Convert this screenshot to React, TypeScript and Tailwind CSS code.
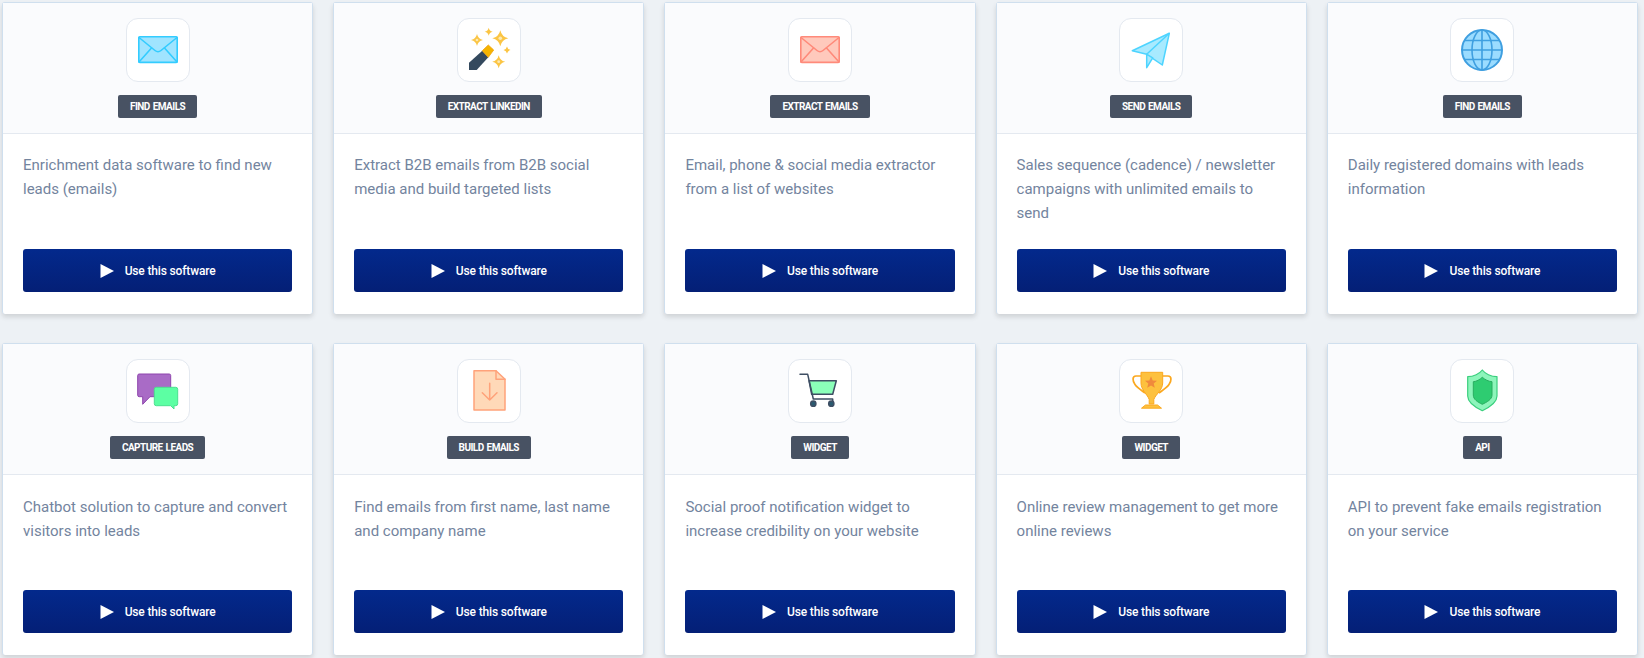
import type { ReactNode } from "react";

function star(cx: number, cy: number, r: number) {
  const k = r * 0.18;
  return `M${cx} ${cy - r}Q${cx + k} ${cy - k} ${cx + r} ${cy}Q${cx + k} ${cy + k} ${cx} ${cy + r}Q${cx - k} ${cy + k} ${cx - r} ${cy}Q${cx - k} ${cy - k} ${cx} ${cy - r}Z`;
}

function MailIcon({ fill, stroke }: { fill: string; stroke: string }) {
  return (
    <g fill="none" stroke={stroke} strokeWidth="1.6" strokeLinejoin="round" strokeLinecap="round">
      <rect x="3.8" y="9.8" width="38.4" height="25.6" rx="1" fill={fill} />
      <path d="M4 10.5 20 23.5c1.7 1.4 4.3 1.4 6 0L42 10.5" />
      <path d="M4 35 16.5 21M42 35 29.5 21" />
    </g>
  );
}

function WandIcon() {
  return (
    <g>
      <path d="M3 35.7 16.3 23.7 22.3 30.3 10.7 43H3Z" fill="#34495e" />
      <path d="M16.3 23.7 22.3 18 27.7 23 22.3 30.3Z" fill="#f5b400" stroke="#ef9f0a" strokeWidth="0.8" strokeLinejoin="round" />
      <path d={star(11, 13, 6)} fill="#fbc544" />
      <path d={star(34.3, 11.3, 8)} fill="#fbc544" />
      <path d={star(22.7, 4.7, 4)} fill="#fbc544" />
      <path d={star(41, 23, 3.5)} fill="#fbc544" />
      <path d={star(32.7, 34.7, 6.5)} fill="#fbc544" />
      <circle cx="34.3" cy="11.3" r="1.8" fill="#fde9b0" />
      <circle cx="11" cy="13" r="1.3" fill="#fde9b0" />
      <circle cx="32.7" cy="34.7" r="1.4" fill="#fde9b0" />
    </g>
  );
}

function PlaneIcon() {
  return (
    <g stroke="#4dd4ff" strokeWidth="1.5" strokeLinejoin="round">
      <path d="M41.3 6.3 4.3 23.7 18.7 27.3 34.3 38Z" fill="#a8eaff" />
      <path d="M18.7 27.3V40.7L24.7 30.8Z" fill="#a8eaff" />
      <path d="M41.3 6.3 18.7 27.3" fill="none" />
    </g>
  );
}

function GlobeIcon() {
  return (
    <g fill="none" stroke="#3f9fe0" strokeWidth="1.6">
      <circle cx="23" cy="23" r="20" fill="#9bdcff" strokeWidth="2" />
      <ellipse cx="23" cy="23" rx="10" ry="20" />
      <path d="M23 3V43M3 23H43M6 13.5H40M6 32.5H40" />
    </g>
  );
}

function ChatIcon() {
  return (
    <g strokeLinejoin="round">
      <path d="M4.2 6H34.2A1.5 1.5 0 0 1 35.7 7.5V27.2A1.5 1.5 0 0 1 34.2 28.7H15L7.7 36.3V28.7H4.2A1.5 1.5 0 0 1 2.7 27.2V7.5A1.5 1.5 0 0 1 4.2 6Z" fill="#a96bc6" stroke="#8e44ad" strokeWidth="1" />
      <path d="M21.3 19.3H40.7A2 2 0 0 1 42.7 21.3V35.7A2 2 0 0 1 40.7 37.7H39V41L35.7 37.7H21.3A2 2 0 0 1 19.3 35.7V21.3A2 2 0 0 1 21.3 19.3Z" fill="#5cffa3" stroke="#4be08f" strokeWidth="1" />
    </g>
  );
}

function FileIcon() {
  return (
    <g fill="none" stroke="#ffa27a" strokeWidth="1.5" strokeLinejoin="round" strokeLinecap="round">
      <path d="M8 2.7H30L39 11.3V42H8Z" fill="#ffd9b8" />
      <path d="M30 2.7V11.3H39" />
      <path d="M23.7 15.3V32M16.3 24.7 23.7 32 31 24.7" />
    </g>
  );
}

function CartIcon() {
  return (
    <g fill="none" stroke="#3e4e63" strokeWidth="1.5" strokeLinejoin="round" strokeLinecap="round">
      <path d="M12 12.7H39.3L35.7 26.3H14.7Z" fill="#8bffb9" />
      <path d="M3 6.3H10.7L16.3 31H35.7V33" />
      <circle cx="16.3" cy="35.7" r="2.6" fill="#2a5a70" />
      <circle cx="34.3" cy="35.7" r="2.6" fill="#2a5a70" />
    </g>
  );
}

function TrophyIcon() {
  return (
    <g stroke="#fba81f" strokeLinejoin="round">
      <path d="M13.5 8H8C4 8 4.5 13 7 16.5 9 19.5 13 22 17 25" fill="none" strokeWidth="1.7" />
      <path d="M34.5 8H40C44 8 43.5 13 41 16.5 39 19.5 35 22 31 25" fill="none" strokeWidth="1.7" />
      <path d="M13 4.3H34.7V15C34.7 22 27.5 26.5 25.8 31.5V36H21.2V31.5C19.5 26.5 13 22 13 15Z" fill="#fdc13e" strokeWidth="1" />
      <path d="M17.5 37H29.5L33.5 40.2H13.5Z" fill="#fdc13e" strokeWidth="1" />
      <path d="M23 8.2 24.7 12.4 29 12.7 25.7 15.5 26.8 19.8 23 17.4 19.2 19.8 20.3 15.5 17 12.7 21.3 12.4Z" fill="#f08a3c" stroke="none" />
    </g>
  );
}

function ShieldIcon() {
  return (
    <g strokeLinejoin="round">
      <path d="M23.3 2C26 5.6 32 8.7 38 8.7V28C38 35 30 39.5 23.3 42.7 16.6 39.5 8.7 35 8.7 28V8.7C14.6 8.7 20.6 5.6 23.3 2Z" fill="#8df5bb" stroke="#3bcf7e" strokeWidth="1.2" />
      <path d="M23.3 9.3C26 11.6 29.5 13.5 33 13.7V27C33 31.5 28 34 23.3 36.3 18.6 34 14.3 31.5 14.3 27V13.7C17.5 13.5 20.8 11.6 23.3 9.3Z" fill="#2ecc71" stroke="#27ae60" strokeWidth="1" />
    </g>
  );
}

const tools: { tag: string; text: string; icon: ReactNode }[] = [
  { tag: "FIND EMAILS", text: "Enrichment data software to find new leads (emails)", icon: <MailIcon fill="#a0e4ff" stroke="#33ccff" /> },
  { tag: "EXTRACT LINKEDIN", text: "Extract B2B emails from B2B social media and build targeted lists", icon: <WandIcon /> },
  { tag: "EXTRACT EMAILS", text: "Email, phone & social media extractor from a list of websites", icon: <MailIcon fill="#ffc9bc" stroke="#ff8a7a" /> },
  { tag: "SEND EMAILS", text: "Sales sequence (cadence) / newsletter campaigns with unlimited emails to send", icon: <PlaneIcon /> },
  { tag: "FIND EMAILS", text: "Daily registered domains with leads information", icon: <GlobeIcon /> },
  { tag: "CAPTURE LEADS", text: "Chatbot solution to capture and convert visitors into leads", icon: <ChatIcon /> },
  { tag: "BUILD EMAILS", text: "Find emails from first name, last name and company name", icon: <FileIcon /> },
  { tag: "WIDGET", text: "Social proof notification widget to increase credibility on your website", icon: <CartIcon /> },
  { tag: "WIDGET", text: "Online review management to get more online reviews", icon: <TrophyIcon /> },
  { tag: "API", text: "API to prevent fake emails registration on your service", icon: <ShieldIcon /> },
];

export default function App() {
  return (
    <div className="h-[658px] overflow-hidden bg-[#edf1f5] pt-[2px] pl-[2px] pr-[6px] font-['Roboto',sans-serif]">
      <div className="grid grid-cols-5 gap-x-[20px] gap-y-[29.4px]">
        {tools.map((tool, i) => (
          <div
            key={i}
            className="flex h-[312px] flex-col rounded-[3px] border border-[#cfdfee] border-b-0 bg-white shadow-[0_3px_5px_rgba(0,0,0,0.13)]"
          >
            <div className="flex flex-col items-center border-b border-[#e4e9f0] bg-[#fafbfd] pt-[15px] pb-[15px]">
              <div className="flex h-[64px] w-[64px] items-center justify-center rounded-[12px] border border-[#e4e9f0] bg-white">
                <svg viewBox="0 0 46 46" className="h-[46px] w-[46px]">
                  {tool.icon}
                </svg>
              </div>
              <span className="mt-[13px] flex h-[23px] items-center rounded-[2px] bg-[#485263] px-[12px] text-[10px] font-bold tracking-[-0.55px] [word-spacing:1px] text-white">
                {tool.tag}
              </span>
            </div>
            <div className="flex flex-1 flex-col px-[20px] pt-[19.3px] pb-[22px]">
              <p className="text-[15px] leading-[24px] text-[#73849e]">{tool.text}</p>
              <button
                type="button"
                className="mt-auto flex h-[43px] items-center justify-center gap-[11px] rounded-[3px] bg-gradient-to-b from-[#03298c] to-[#041f76] text-[12px] font-medium tracking-[-0.15px] text-white"
              >
                <svg viewBox="0 0 14 14" className="h-[14px] w-[14px]">
                  <path d="M0.5 0 14 7 0.5 14Z" fill="#fff" />
                </svg>
                Use this software
              </button>
            </div>
          </div>
        ))}
      </div>
    </div>
  );
}
